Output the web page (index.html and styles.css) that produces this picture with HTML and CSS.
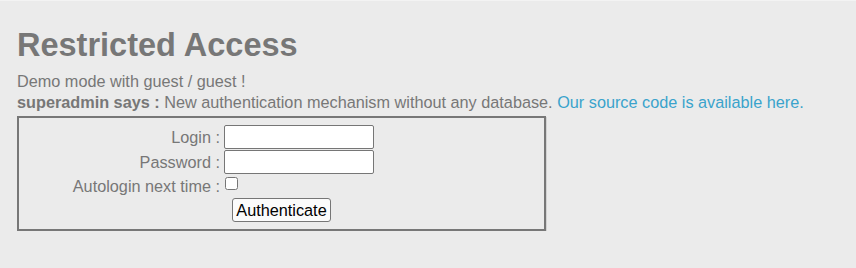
FILE: index.html
```html
<!DOCTYPE html>
<html lang="en">
<head>
    <meta charset="UTF-8">
    <meta name="viewport" content="width=device-width, initial-scale=1.0">
    <title>Restricted Access</title>
    <link rel="stylesheet" href="styles.css">
</head>
<body>
    <div class="page">
        <h1>Restricted Access</h1>
        <p class="info">Demo mode with guest / guest !</p>
        <p class="info"><b>superadmin says :</b> New authentication mechanism without any database. <a href="#">Our source code is available here.</a></p>

        <form class="login-box" onsubmit="return false">
            <label for="login">Login :</label>
            <input type="text" id="login" name="login">

            <label for="password">Password :</label>
            <input type="password" id="password" name="password">

            <label for="autologin" class="check-label">Autologin next time :</label>
            <input type="checkbox" id="autologin" name="autologin">

            <div class="actions">
                <button type="submit">Authenticate</button>
            </div>
        </form>
    </div>
</body>
</html>
```

FILE: styles.css
```css
body {
    margin: 0;
    border-top: 1px solid #f3f3f3;
    background-color: #ebebeb;
    font-family: "Liberation Sans", Arial, sans-serif;
    font-size: 16.25px;
    color: #777777;
}

.page {
    padding: 0 17px;
}

h1 {
    margin: 26px 0 7px;
    font-size: 32.5px;
    line-height: 37px;
    color: #777777;
}

.info {
    margin: 0;
    line-height: 21px;
}

a {
    color: #3aa3cc;
    text-decoration: none;
}

.login-box {
    display: grid;
    grid-template-columns: 201px 1fr;
    column-gap: 4px;
    row-gap: 1px;
    align-items: center;
    width: 529px;
    box-sizing: border-box;
    margin-top: 3px;
    padding: 7px 0 7px;
    border: 2px solid #777777;
    box-shadow: 1px 1px 0 #d2d2d2;
}

label {
    text-align: right;
    line-height: 18px;
}

input[type="text"],
input[type="password"] {
    width: 150px;
    height: 24px;
    box-sizing: border-box;
    margin: 0;
    padding: 1px 2px;
    border: 1px solid #767676;
    border-radius: 2px;
    background-color: #ffffff;
    font-family: "Liberation Sans", Arial, sans-serif;
    font-size: 16px;
}

.check-label {
    align-self: start;
    padding-top: 2px;
}

input[type="checkbox"] {
    align-self: start;
    width: 13px;
    height: 13px;
    margin: 2px 0 0 1px;
}

.actions {
    grid-column: 1 / 3;
    text-align: center;
    padding-top: 2px;
}

button {
    height: 24px;
    padding: 1px 3px;
    border: 1px solid #767676;
    border-radius: 3px;
    background-color: #fbfbfb;
    color: #000000;
    font-family: "Liberation Sans", Arial, sans-serif;
    font-size: 16.25px;
    cursor: pointer;
}
```
